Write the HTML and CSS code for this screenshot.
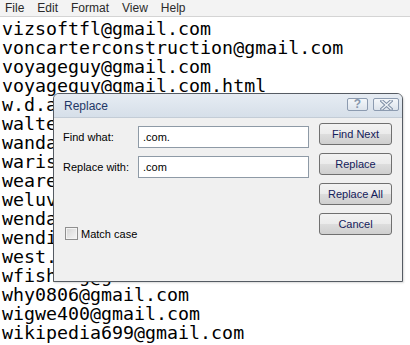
FILE: index.html
```html
<!DOCTYPE html>
<html lang="en">
<head>
    <meta charset="UTF-8">
    <meta name="viewport" content="width=device-width, initial-scale=1.0">
    <title>Notepad - Replace</title>
    <link rel="stylesheet" href="styles.css">
</head>
<body>

    <div class="menubar">
        <span class="menu-item">File</span>
        <span class="menu-item">Edit</span>
        <span class="menu-item">Format</span>
        <span class="menu-item">View</span>
        <span class="menu-item">Help</span>
    </div>

<pre class="document">vizsoftfl@gmail.com
voncarterconstruction@gmail.com
voyageguy@gmail.com
voyageguy@gmail.com.html
w.d.anderson@gmail.com
walters.mike@gmail.com
wandajones@gmail.com
warisali@gmail.com
weareone@gmail.com
weluvmusic@gmail.com
wendalynn@gmail.com
wendicook@gmail.com
west.coast@gmail.com
wfishing@gmail.com
why0806@gmail.com
wigwe400@gmail.com
wikipedia699@gmail.com</pre>

    <div class="dialog">
        <div class="titlebar">
            <span class="title">Replace</span>
            <div class="caption-buttons">
                <span class="cap-btn help">?</span>
                <span class="cap-btn close">
                    <svg width="13" height="10" viewBox="0 0 13 10">
                        <path d="M2 1 L11 9 M11 1 L2 9" stroke="#7f8fa6" stroke-width="3.4" stroke-linecap="square"/>
                        <path d="M2 1 L11 9 M11 1 L2 9" stroke="#eef2f6" stroke-width="1.4" stroke-linecap="square"/>
                    </svg>
                </span>
            </div>
        </div>
        <div class="dialog-body">
            <div class="fields">
                <div class="field-row">
                    <label class="field-label">Find what:</label>
                    <input type="text" class="textbox" value=".com.">
                </div>
                <div class="field-row">
                    <label class="field-label">Replace with:</label>
                    <input type="text" class="textbox" value=".com">
                </div>
                <div class="check-row">
                    <span class="checkbox"></span>
                    <span>Match case</span>
                </div>
            </div>
            <div class="buttons">
                <button class="button">Find Next</button>
                <button class="button">Replace</button>
                <button class="button">Replace All</button>
                <button class="button">Cancel</button>
            </div>
        </div>
    </div>

</body>
</html>
```

FILE: styles.css
```css
body {
    margin: 0;
    background: #ffffff;
    font-family: 'Liberation Sans', Arial, sans-serif;
    position: relative;
    height: 345px;
    overflow: hidden;
}

.menubar {
    height: 16px;
    display: flex;
    align-items: center;
    gap: 13px;
    padding-left: 5px;
    background: #f3f3f3;
    border-bottom: 1px solid #d4d4d4;
    font-size: 12px;
    color: #2a2a2a;
}

.document {
    margin: 0;
    padding: 2px 0 0 2px;
    font-family: 'DejaVu Sans Mono', 'Liberation Mono', monospace;
    font-size: 18.3px;
    line-height: 19px;
    color: #000;
}

.dialog {
    position: absolute;
    left: 53px;
    top: 93px;
    width: 350px;
    height: 189px;
    box-sizing: border-box;
    border: 1px solid #555b63;
    border-radius: 6px 6px 0 0;
    background: #f0f0f0;
    display: flex;
    flex-direction: column;
    box-shadow: 1px 1px 2px rgba(0, 0, 0, 0.15);
}

.titlebar {
    height: 23px;
    flex: none;
    display: flex;
    align-items: center;
    justify-content: space-between;
    padding: 0 3px 0 10px;
    background: linear-gradient(#e6ecf3, #d6dfe9);
    border-radius: 5px 5px 0 0;
    border-bottom: 1px solid #c3ccd6;
}

.title {
    font-size: 12px;
    color: #1e3766;
    padding-top: 1px;
}

.caption-buttons {
    display: flex;
    gap: 5px;
    align-self: flex-start;
    margin-top: 4px;
}

.cap-btn {
    height: 13px;
    box-sizing: border-box;
    border: 1px solid #8c9bb0;
    border-radius: 2px;
    background: linear-gradient(#f4f7fa, #dde4ec);
    display: flex;
    align-items: center;
    justify-content: center;
}

.cap-btn.help {
    width: 21px;
    font-size: 12px;
    font-weight: bold;
    color: #8797ad;
    line-height: 11px;
}

.cap-btn.close {
    width: 26px;
}

.dialog-body {
    flex: 1;
    display: flex;
    padding: 5px 0 0 9px;
}

.fields {
    width: 246px;
    padding-top: 3px;
}

.field-row {
    display: flex;
    align-items: center;
    height: 22px;
    margin-bottom: 8px;
}

.field-label {
    width: 75px;
    flex: none;
    font-size: 11px;
    color: #000;
}

.textbox {
    width: 171px;
    height: 22px;
    box-sizing: border-box;
    margin: 0;
    border: 1px solid #8e9aa6;
    background: #fff;
    padding: 0 0 0 4px;
    font-family: 'Liberation Sans', Arial, sans-serif;
    font-size: 11px;
    color: #000;
    outline: none;
}

.check-row {
    display: flex;
    align-items: center;
    gap: 3px;
    margin-top: 49px;
    padding-left: 2px;
    font-size: 11px;
    color: #000;
}

.checkbox {
    width: 13px;
    height: 13px;
    box-sizing: border-box;
    border: 1px solid #8f8f8f;
    background: linear-gradient(135deg, #d4d4d4, #f6f6f6);
    box-shadow: inset 0 0 0 1px #f4f4f4;
}

.buttons {
    display: flex;
    flex-direction: column;
    gap: 8px;
    margin-left: 10px;
}

.button {
    width: 73px;
    height: 22px;
    padding: 0;
    border: 1px solid #707070;
    border-radius: 3px;
    background: linear-gradient(#f3f3f3 0%, #ebebeb 50%, #dddddd 51%, #cfcfcf 100%);
    font-family: 'Liberation Sans', Arial, sans-serif;
    font-size: 11px;
    color: #14205a;
}
```
